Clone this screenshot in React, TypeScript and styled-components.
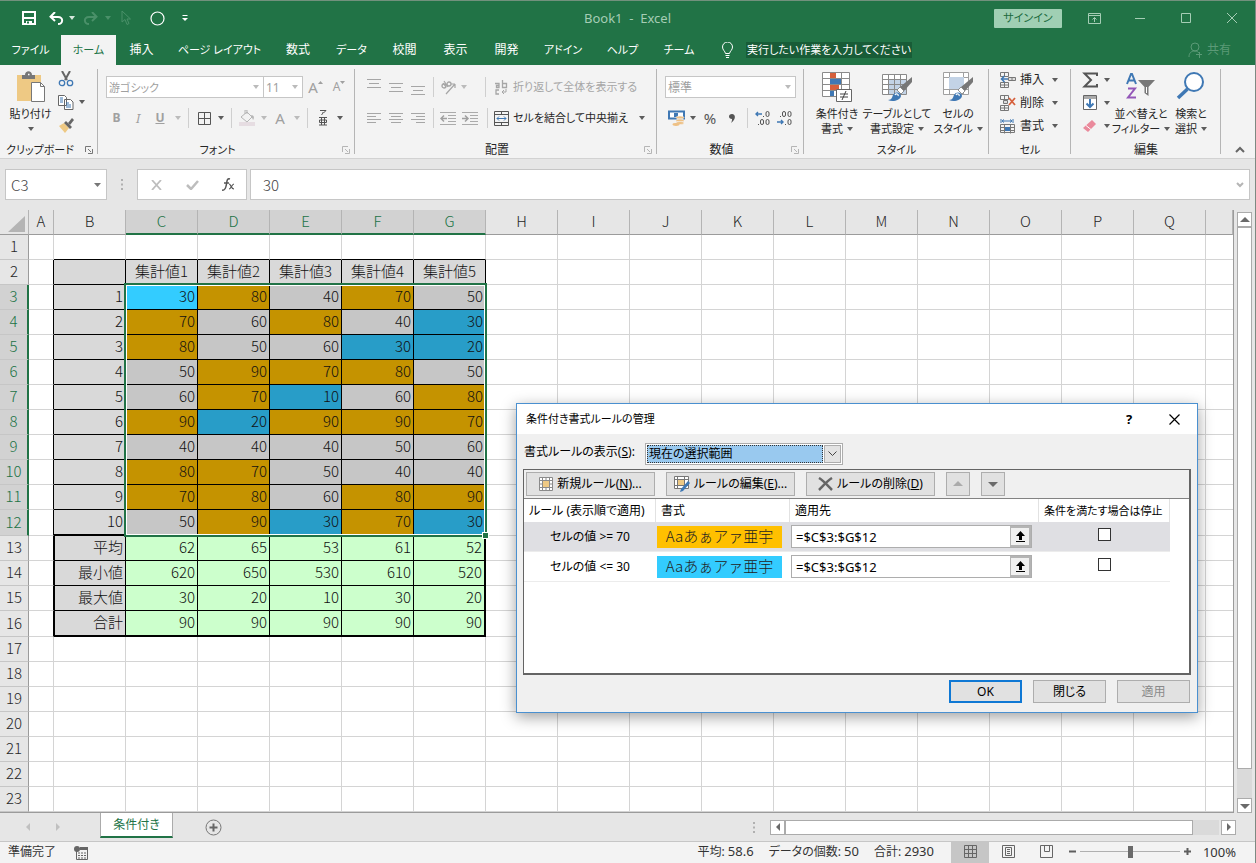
import React from "react";
import styled, { createGlobalStyle, css } from "styled-components";

const uiFont = `"Noto Sans", "Noto Sans CJK JP", sans-serif`;
const sheetFont = `"Noto Sans CJK JP", sans-serif`;

const Global = createGlobalStyle`
  *, *::before, *::after { box-sizing: border-box; }
  body { margin: 0; background: #e6e6e6; }
  button, input, select { font: inherit; color: inherit; }
  button { border: 0; background: none; padding: 0; margin: 0; }
`;

const Window = styled.div`
  position: relative;
  display: flex;
  flex-direction: column;
  min-height: 100vh;
  border-top: 1px solid #72917d;
  border-right: 1px solid #7d8a82;
  border-bottom: 1px solid #7f7f7f;
  background: #e6e6e6;
  color: #262626;
  font: 12px/16px ${uiFont};
  font-feature-settings: "palt";
  white-space: nowrap;
`;

/* ---------- title bar and tabs ---------- */

const TitleBar = styled.header`
  display: grid;
  grid-template-columns: 1fr auto 1fr;
  align-items: center;
  height: 34px;
  background: #217346;
  color: #f2f2f2;
`;
const QuickAccess = styled.div`
  display: flex;
  align-items: center;
  padding-left: 14px;
`;
const Title = styled.div`
  color: #a5cdb5;
  font-size: 13px;
`;
const WindowButtons = styled.div`
  display: flex;
  justify-content: flex-end;
  align-items: center;
`;
const Slot = styled.button<{ $w: number; $h?: number; $tone?: string; $align?: string }>`
  display: flex;
  flex: none;
  align-items: ${(p) => p.$align ?? "center"};
  justify-content: center;
  width: ${(p) => p.$w}px;
  height: ${(p) => p.$h ?? 22}px;
  padding: 3px 0;
  color: ${(p) => p.$tone ?? "inherit"};
`;
const SignIn = styled.button`
  width: 68px;
  height: 19px;
  margin-right: 9px;
  border-radius: 1px;
  background: #a0cfb4;
  color: #1c6b3f;
  font-size: 11px;
`;
const TabBar = styled.nav`
  display: flex;
  align-items: stretch;
  height: 30px;
  background: #217346;
  color: #fff;
`;
const Tab = styled.button<{ $w: number; $on?: boolean; $kana?: boolean }>`
  flex: none;
  width: ${(p) => p.$w}px;
  font-size: ${(p) => (p.$kana ? 11 : 12)}px;
  background: ${(p) => (p.$on ? "#f3f3f3" : "transparent")};
  color: ${(p) => (p.$on ? "#217346" : "#fff")};
`;
const TellMe = styled.div`
  display: flex;
  align-items: center;
  gap: 12px;
  padding-left: 14px;
`;
const TellMeText = styled.button`
  height: 16px;
  padding: 0 1px;
  background: #185c37;
  color: #fff;
  font-size: 11px;
`;
const Share = styled.button`
  display: flex;
  align-items: center;
  gap: 4px;
  margin-left: auto;
  margin-right: 24px;
  color: #5b9a77;
`;

/* ---------- ribbon ---------- */

const Ribbon = styled.section`
  display: flex;
  height: 94px;
  background: #f3f3f3;
  border-bottom: 1px solid #d2d2d2;
`;
const Group = styled.div<{ $w: number }>`
  position: relative;
  display: flex;
  flex: none;
  flex-direction: column;
  width: ${(p) => p.$w}px;
  padding-top: 3px;
  &::after {
    content: "";
    position: absolute;
    top: 4px;
    bottom: 4px;
    right: 0;
    width: 1px;
    background: #b5b5b5;
  }
`;
const GroupBody = styled.div<{ $left?: number }>`
  display: flex;
  height: 73px;
  padding-left: ${(p) => p.$left ?? 0}px;
`;
const GroupFoot = styled.div<{ $launcher?: boolean; $kana?: boolean }>`
  display: grid;
  grid-template-columns: ${(p) => (p.$launcher ? "1fr 18px" : "1fr")};
  align-items: center;
  justify-items: center;
  height: 17px;
  font-size: ${(p) => (p.$kana ? 11 : 12)}px;
`;
const Rows = styled.div`
  display: flex;
  flex-direction: column;
  gap: 9px;
  padding-top: 8px;
`;
const Row = styled.div`
  display: flex;
  align-items: center;
  height: 22px;
`;
const Column = styled.div<{ $w: number }>`
  display: flex;
  flex: none;
  flex-direction: column;
  width: ${(p) => p.$w}px;
`;
const Divider = styled.span<{ $w: number }>`
  flex: none;
  width: ${(p) => p.$w}px;
  height: 20px;
  background: linear-gradient(#cfcfcf, #cfcfcf) center / 1px 100% no-repeat;
`;
const ComboFrame = styled.span<{ $w: number }>`
  display: flex;
  flex: none;
  align-items: center;
  width: ${(p) => p.$w}px;
  height: 22px;
  padding-right: 4px;
  background: #fff;
  border: 1px solid #c6c6c6;
  color: #a0a0a0;
  & + & { border-left-width: 0; }
`;
const ComboInput = styled.input<{ $kana?: boolean }>`
  flex: 1;
  min-width: 0;
  height: 18px;
  padding: 0 0 0 2px;
  border: 0;
  outline: 0;
  background: none;
  font-size: ${(p) => (p.$kana ? 11 : 12)}px;
`;
const Command = styled.button<{ $dim?: boolean; $w?: number; $kana?: boolean }>`
  display: flex;
  flex: none;
  align-items: center;
  gap: 4px;
  height: 23px;
  font-size: ${(p) => (p.$kana ? 11 : 12)}px;
  ${(p) => p.$w && css`width: ${p.$w}px;`}
  color: ${(p) => (p.$dim ? "#a6a6a6" : "#262626")};
  & > svg:last-child:not(:first-child) { margin-left: auto; }
`;
const BigButton = styled.button<{ $w: number }>`
  display: flex;
  flex: none;
  flex-direction: column;
  align-items: center;
  width: ${(p) => p.$w}px;
  padding-top: 3px;
  font-size: 11px;
  line-height: 15px;
  & > svg { margin-bottom: 3px; }
`;
const BigLabel = styled.span`
  display: flex;
  align-items: center;
  gap: 4px;
  height: 15px;
`;
const Letter = styled.span<{ $size: number; $bold?: boolean; $italic?: boolean; $under?: boolean }>`
  font-size: ${(p) => p.$size}px;
  line-height: 16px;
  font-weight: ${(p) => (p.$bold ? 700 : 400)};
  font-style: ${(p) => (p.$italic ? "italic" : "normal")};
  text-decoration: ${(p) => (p.$under ? "underline" : "none")};
`;
const Collapse = styled.button`
  display: flex;
  align-self: flex-end;
  margin: 0 10px 4px auto;
`;

/* ---------- formula bar ---------- */

const FormulaBar = styled.div`
  display: flex;
  height: 51px;
  padding: 10px 5px;
`;
const Field = styled.div<{ $w?: number }>`
  display: flex;
  align-items: center;
  ${(p) => (p.$w ? css`flex: none; width: ${p.$w}px;` : css`flex: 1;`)}
  height: 31px;
  padding-right: 5px;
  border: 1px solid #c6c6c6;
  background: #fff;
  & + & { margin-left: 3px; }
`;
const FieldInput = styled.input<{ $left: number }>`
  flex: 1;
  min-width: 0;
  height: 26px;
  padding: 0 0 0 ${(p) => p.$left}px;
  border: 0;
  outline: 0;
  background: none;
  color: #444;
  font: 300 15px/26px ${sheetFont};
`;
const Grip = styled.span<{ $w: number }>`
  display: flex;
  flex: none;
  align-items: center;
  justify-content: center;
  width: ${(p) => p.$w}px;
`;

/* ---------- sheet ---------- */

const Workspace = styled.main`
  display: flex;
  flex: 1;
`;
const SheetArea = styled.div`
  position: relative;
  flex: 1;
  min-width: 0;
  overflow: hidden;
  border-right: 1px solid #9b9b9b;
  border-bottom: 1px solid #9b9b9b;
  background: #fff;
`;
const Sheet = styled.table`
  width: 100%;
  table-layout: fixed;
  border-collapse: separate;
  border-spacing: 0;
  font: 300 15px/20px ${sheetFont};
  font-feature-settings: normal;
  color: #111;
`;
const Line = styled.tr<{ $tall?: boolean }>`
  height: ${(p) => (p.$tall ? 26 : 25)}px;
`;
const ColHead = styled.th<{ $on?: boolean }>`
  padding: 0 0 2px;
  font-weight: 300;
  background: ${(p) => (p.$on ? "#d2d2d2" : "#e6e6e6")};
  color: ${(p) => (p.$on ? "#217346" : "#262626")};
  border-right: 1px solid #b4b4b4;
  border-bottom: ${(p) => (p.$on ? "2px solid #217346" : "1px solid #9b9b9b")};
`;
const Corner = styled.th`
  padding: 0 3px 2px 0;
  background: #e6e6e6;
  border-right: 1px solid #b4b4b4;
  border-bottom: 1px solid #9b9b9b;
  text-align: right;
  vertical-align: bottom;
  line-height: 0;
`;
const RowHead = styled.th<{ $on?: boolean }>`
  padding: 0 0 2px;
  font-weight: 300;
  background: ${(p) => (p.$on ? "#d2d2d2" : "#e6e6e6")};
  color: ${(p) => (p.$on ? "#217346" : "#262626")};
  border-right: ${(p) => (p.$on ? "2px solid #217346" : "1px solid #9b9b9b")};
  border-bottom: 1px solid #c6c6c6;
`;
const Cell = styled.td<{
  $fill?: string;
  $right?: string;
  $bottom?: string;
  $left?: string;
  $center?: boolean;
}>`
  height: 25px;
  padding: 0 2px 2px;
  overflow: hidden;
  background: ${(p) => p.$fill ?? "#fff"};
  border-right: ${(p) => p.$right ?? "1px solid #d4d4d4"};
  border-bottom: ${(p) => p.$bottom ?? "1px solid #d4d4d4"};
  border-left: ${(p) => p.$left ?? "0"};
  text-align: ${(p) => (p.$center ? "center" : "right")};
`;
const SelectionFrame = styled.div`
  position: absolute;
  left: 124px;
  top: 73px;
  width: 363px;
  height: 254px;
  border: 2px solid #217346;
  box-shadow: inset 0 0 0 1px #fff;
`;
const FillHandle = styled.span`
  position: absolute;
  right: -4px;
  bottom: -4px;
  width: 7px;
  height: 7px;
  border: 1px solid #fff;
  background: #217346;
`;
const VScroll = styled.div`
  display: flex;
  flex: none;
  flex-direction: column;
  width: 21px;
  padding: 2px 3px 0;
`;
const ScrollButton = styled.button`
  display: flex;
  flex: none;
  align-items: center;
  justify-content: center;
  width: 15px;
  height: 15px;
  border: 1px solid #ababab;
  background: #fff;
  color: #6a6a6a;
`;
const VTrack = styled.div`
  flex: 1;
  background: #dadada;
`;
const VThumb = styled.div`
  height: 95%;
  border: 1px solid #ababab;
  background: #fff;
`;

/* ---------- sheet tabs and status ---------- */

const SheetTabs = styled.div`
  display: flex;
  height: 29px;
  border-bottom: 1px solid #c6c6c6;
`;
const SheetNav = styled.div`
  display: flex;
  align-items: center;
  justify-content: center;
  gap: 20px;
  width: 100px;
  padding-right: 14px;
  color: #c0c0c0;
`;
const SheetTab = styled.button`
  width: 73px;
  height: 25px;
  border: solid #ababab;
  border-width: 0 1px;
  border-bottom: 2px solid #217346;
  background: #fff;
  color: #217346;
`;
const AddSheet = styled.button`
  display: flex;
  align-items: center;
  margin-left: 32px;
`;
const HScroll = styled.div`
  display: flex;
  align-items: center;
  flex: 0 0 502px;
  margin-left: auto;
  padding-right: 19px;
`;
const HBar = styled.div`
  display: flex;
  flex: 1;
  margin-left: 15px;
`;
const HTrack = styled.div`
  flex: 1;
  height: 15px;
  margin-right: 2px;
  background: #dadada;
`;
const HThumb = styled.div`
  width: 94%;
  height: 15px;
  border: 1px solid #ababab;
  background: #fff;
`;
const StatusBar = styled.footer`
  display: flex;
  align-items: center;
  height: 21px;
  padding: 0 19px 0 8px;
  background: #f3f3f3;
  color: #333;
`;
const StatusText = styled.span`
  padding-bottom: 2px;
`;
const Stats = styled.div`
  display: flex;
  gap: 15px;
  margin-left: auto;
  margin-right: 17px;
  padding-bottom: 2px;
`;
const Figure = styled.span`
  font-size: 13px;
`;
const ViewButton = styled.button<{ $on?: boolean }>`
  display: flex;
  align-items: center;
  justify-content: center;
  width: 38px;
  height: 21px;
  padding-bottom: 2px;
  background: ${(p) => (p.$on ? "#c6c6c6" : "transparent")};
`;
const ZoomGroup = styled.div`
  display: flex;
  align-items: center;
  padding: 0 0 2px 3px;
`;
const Zoom = styled.input`
  appearance: none;
  width: 100px;
  height: 13px;
  margin: 0 3px;
  background: linear-gradient(#b0b0b0, #b0b0b0) center / 100% 1px no-repeat;
  &::-webkit-slider-thumb {
    appearance: none;
    width: 5px;
    height: 12px;
    background: #6a6a6a;
  }
`;
const ZoomSign = styled.button`
  display: flex;
  justify-content: center;
  width: 9px;
`;
const ZoomValue = styled.span`
  width: 44px;
  font-size: 13px;
  text-align: right;
`;

/* ---------- dialog ---------- */

const Dialog = styled.section`
  position: absolute;
  left: 516px;
  top: 402px;
  width: 682px;
  border: 1px solid #4a90d0;
  background: #f0f0f0;
  color: #000;
  box-shadow: 0 4px 14px rgba(0, 0, 0, 0.38);
`;
const DialogTitle = styled.div`
  display: flex;
  align-items: center;
  height: 30px;
  padding: 0 1px 0 9px;
  background: #fff;
  font-size: 11px;
`;
const DialogTools = styled.div`
  display: flex;
  margin-left: auto;
`;
const Scope = styled.div`
  display: flex;
  align-items: center;
  gap: 10px;
  height: 35px;
  padding-left: 7px;
`;
const SelectFrame = styled.span`
  display: flex;
  width: 198px;
  height: 22px;
  margin-top: 4px;
  padding: 1px;
  border: 1px solid #adadad;
  background: #fff;
`;
const ScopeSelect = styled.select`
  appearance: none;
  flex: 1;
  min-width: 0;
  padding: 0 1px;
  border: 1px dotted #333;
  border-radius: 0;
  outline: 0;
  background: #99c9ef;
`;
const SelectArrow = styled.span`
  display: flex;
  align-items: center;
  justify-content: center;
  width: 17px;
  margin-left: 1px;
  border: 1px solid #adadad;
  background: #e3e3e3;
`;
const RulesBox = styled.div`
  margin: 0 6px;
  height: 206px;
  border: 1px solid #646464;
  border-right-width: 2px;
  border-bottom-width: 2px;
  background: #fff;
`;
const RuleTools = styled.div`
  display: flex;
  gap: 11px;
  padding: 2px;
  height: 29px;
  background: #f0f0f0;
  border-bottom: 1px solid #828282;
`;
const RuleButton = styled.button<{ $w: number; $tone?: string }>`
  display: flex;
  align-items: center;
  justify-content: center;
  gap: 4px;
  width: ${(p) => p.$w}px;
  height: 24px;
  border: 1px solid #adadad;
  background: #e1e1e1;
  color: ${(p) => p.$tone ?? "#000"};
`;
const Rules = styled.table`
  width: 646px;
  table-layout: fixed;
  border-collapse: separate;
  border-spacing: 0;
`;
const RuleHead = styled.th<{ $kana?: boolean }>`
  height: 23px;
  padding: 0 0 0 5px;
  border-right: 1px solid #e2e2e2;
  font-size: ${(p) => (p.$kana ? 11 : 12)}px;
  font-weight: 400;
  text-align: left;
`;
const RuleCell = styled.td<{ $on?: boolean }>`
  height: 30px;
  padding: 0 1px;
  background: ${(p) => (p.$on ? "#dfdfe3" : "#fff")};
  border-bottom: 1px solid #ececec;
  text-align: center;
`;
const Preview = styled.div<{ $fill: string }>`
  width: 125px;
  height: 22px;
  padding-bottom: 2px;
  background: ${(p) => p.$fill};
  color: #222;
  font: 300 15px/20px ${sheetFont};
  font-feature-settings: normal;
`;
const RangeBox = styled.div`
  display: flex;
  width: 241px;
  height: 23px;
  border: 1px solid #adadad;
  background: #fff;
`;
const RangeInput = styled.input`
  flex: 1;
  min-width: 0;
  padding: 0 4px;
  border: 0;
  outline: 0;
  background: none;
  font-size: 13px;
`;
const RangeButton = styled.button`
  display: flex;
  align-items: center;
  justify-content: center;
  width: 21px;
  border: 2px solid #b4b4b4;
  border-left-width: 1px;
  background: #f0f0f0;
`;
const Check = styled.input`
  appearance: none;
  display: block;
  width: 13px;
  height: 13px;
  margin: 0 auto 4px;
  border: 1px solid #333;
  background: #fff;
`;
const DialogFoot = styled.div`
  display: flex;
  justify-content: flex-end;
  gap: 11px;
  padding: 5px 7px 9px;
`;
const DialogButton = styled.button<{ $main?: boolean; $off?: boolean }>`
  width: 73px;
  height: 23px;
  border: ${(p) => (p.$main ? "2px solid #0f78d4" : "1px solid #adadad")};
  background: #e1e1e1;
  color: ${(p) => (p.$off ? "#8a8a8a" : "#000")};
`;

/* ---------- drawings ---------- */

const Drawing = styled.svg`
  display: block;
  flex: none;
`;
const Art = ({ w, h, children }: { w: number; h: number; children?: React.ReactNode }) => (
  <Drawing width={w} height={h} viewBox={`0 0 ${w} ${h}`} fill="none" aria-hidden="true">
    {children}
  </Drawing>
);
const Caret = ({ tone = "#5c5c5c" }: { tone?: string }) => (
  <Art w={6} h={4}><path d="M0 0h6L3 4z" fill={tone} /></Art>
);
const Launcher = ({ dim }: { dim?: boolean }) => (
  <Art w={8} h={8}>
    <path d="M.5 6V.5H6M3 3l3 3M7.500 3v4.500H3" stroke={dim ? "#b5b5b5" : "#777"} />
  </Art>
);
const Dots = () => (
  <Art w={2} h={11}><path d="M0 0h2v2H0zM0 4.500h2v2H0zM0 9h2v2H0z" fill="#b0b0b0" /></Art>
);
const Lines = ({ rows }: { rows: [number, number][] }) => (
  <Art w={14} h={rows.length > 3 ? 11 : 9}>
    {rows.map(([x, len], i) => (
      <path key={i} d={`M${x} ${i * (rows.length > 3 ? 3 : 4) + 0.5}h${len}`} stroke="#a6a6a6" />
    ))}
  </Art>
);
const Tri = ({ d }: { d: "u" | "d" | "l" | "r" }) => {
  const paths = { u: "M0 7h10L5 2z", d: "M0 3h10L5 8z", l: "M7 1v8L3 5z", r: "M3 1v8l4-4z" };
  return <Art w={10} h={10}><path d={paths[d]} fill="currentColor" /></Art>;
};
const Brush = () => (
  <>
    <path d="M31 6v5l-8 9-4-4z" fill="#777" />
    <path d="M19 16l4 4-3 3-4-4z" fill="#fff" stroke="#777" strokeWidth=".8" />
    <path d="M7 29c4 0 4-3 5-5 2-4 8-3 8 1-1 5-9 6-13 4z" fill="#3f78b4" />
    <path d="M14 24c1-2 4-1 3 1" stroke="#fff" strokeWidth="1.200" />
  </>
);
const CellsIcon = ({ kind }: { kind: "insert" | "delete" | "format" }) => (
  <Art w={16} h={16}>
    {kind === "format" ? (
      <>
        <path d="M1 1v4M13 1v4M2 3h10" stroke="#3f78b4" />
        <path d="M4 1.500L2 3l2 1.500M10 1.500L12 3l-2 1.500" stroke="#3f78b4" />
        <path d="M.5 6.500h14v8H.5zM.5 9.500h14M.5 12.500h14M4.500 6.500v9M10.500 6.500v9" stroke="#777" />
        <path d="M5 9h5v4H5z" fill="#3f78b4" />
      </>
    ) : (
      <>
        <path d="M.5 .5h8v4h-8zM4.500 .5v4M.5 10.500h8v5h-8zM4.500 10.500v5M.5 13h8" stroke="#777" />
        {kind === "insert" ? (
          <>
            <path d="M8.500 5.500h7v3h-7zM12 5.500v3" stroke="#777" fill="#ddd" />
            <path d="M8 7H2M4.500 4L1.500 7l3 3" stroke="#3f78b4" strokeWidth="1.600" />
          </>
        ) : (
          <>
            <path d="M3.500 5.500h4v3h-4z" stroke="#777" fill="#ddd" />
            <path d="M9 3l6 7M15 3l-6 7" stroke="#d6603c" strokeWidth="1.800" />
          </>
        )}
      </>
    )}
  </Art>
);

/* ---------- data ---------- */

const GRAY = "#c6c6c6";
const GOLD = "#c59300";
const BLUE = "#289dc8";
const ACTIVE = "#33ccff";
const HEAD = "#d9d9d9";
const MINT = "#ccffcc";
const BLACK = "1px solid #000";
const THICK = "2px solid #000";

const columns = "ABCDEFGHIJKLMNOPQ".split("");
const values = [
  [30, 80, 40, 70, 50],
  [70, 60, 80, 40, 30],
  [80, 50, 60, 30, 20],
  [50, 90, 70, 80, 50],
  [60, 70, 10, 60, 80],
  [90, 20, 90, 90, 70],
  [40, 40, 40, 50, 60],
  [80, 70, 50, 40, 40],
  [70, 80, 60, 80, 90],
  [50, 90, 30, 70, 30],
];
const summary: [string, number[]][] = [
  ["平均", [62, 65, 53, 61, 52]],
  ["最小値", [620, 650, 530, 610, 520]],
  ["最大値", [30, 20, 10, 30, 20]],
  ["合計", [90, 90, 90, 90, 90]],
];
const fillFor = (v: number, first: boolean) =>
  first ? ACTIVE : v >= 70 ? GOLD : v <= 30 ? BLUE : GRAY;

const tabs: { name: string; w: number; kana?: boolean }[] = [
  { name: "ファイル", w: 61, kana: true },
  { name: "ホーム", w: 55, kana: true },
  { name: "挿入", w: 51 },
  { name: "ページ レイアウト", w: 105, kana: true },
  { name: "数式", w: 52 },
  { name: "データ", w: 55, kana: true },
  { name: "校閲", w: 51 },
  { name: "表示", w: 51 },
  { name: "開発", w: 51 },
  { name: "アドイン", w: 62, kana: true },
  { name: "ヘルプ", w: 57, kana: true },
  { name: "チーム", w: 56, kana: true },
];

function SheetRow({ n }: { n: number }) {
  const inBlock = n >= 2 && n <= 16;
  const total = n >= 13 && n <= 16;
  const data = n >= 3 && n <= 12;
  const bottomOf = (col: number) => {
    if (col < 1 || col > 6 || n > 16) return undefined;
    return n === 16 || n === 12 ? THICK : BLACK;
  };
  return (
    <Line $tall={n === 12 || n === 16}>
      <RowHead scope="row" $on={data}>{n}</RowHead>
      {[...columns, "R"].map((c, i) => {
        const within = inBlock && i >= 1 && i <= 6;
        let text: React.ReactNode = null;
        let fill: string | undefined;
        if (within) {
          if (n === 2) {
            fill = HEAD;
            text = i > 1 ? `集計値${i - 1}` : null;
          } else if (data) {
            const v = values[n - 3][i - 2];
            fill = i === 1 ? HEAD : fillFor(v, n === 3 && i === 2);
            text = i === 1 ? n - 2 : v;
          } else {
            fill = i === 1 ? HEAD : MINT;
            text = i === 1 ? summary[n - 13][0] : summary[n - 13][1][i - 2];
          }
        }
        return (
          <Cell
            key={c}
            $fill={fill}
            $center={n === 2}
            $left={total && i === 1 ? BLACK : undefined}
            $right={
              i === 17 ? "0" : total && i === 6 ? THICK : within || (inBlock && i === 0) ? BLACK : undefined
            }
            $bottom={bottomOf(i)}
          >
            {text}
          </Cell>
        );
      })}
    </Line>
  );
}

function RibbonArea() {
  return (
    <Ribbon>
      <Group $w={98}>
        <GroupBody $left={7}>
          <BigButton $w={47}>
            <Art w={30} h={32}>
              <path d="M1 4h24v26H1z" fill="#eec984" />
              <path d="M6 8V4h3c0-5 7-5 7 0h3v4z" fill="#777" />
              <path d="M12 3.500h1.500" stroke="#fff" strokeWidth="1.500" />
              <path d="M15.500 11.500h9l4 4v15h-13z" fill="#fff" stroke="#777" />
              <path d="M24.500 11.500v4h4" stroke="#777" />
            </Art>
            貼り付け
            <BigLabel><Caret /></BigLabel>
          </BigButton>
          <Column $w={24}>
            <Slot $w={24} aria-label="切り取り">
              <Art w={16} h={16}>
                <path d="M4 0l5 9M12 0L7 9" stroke="#666" strokeWidth="2" />
                <circle cx="4" cy="12" r="2.700" stroke="#3f78b4" strokeWidth="1.300" />
                <circle cx="12" cy="12" r="2.700" stroke="#3f78b4" strokeWidth="1.300" />
              </Art>
            </Slot>
            <Slot $w={24} $h={24} aria-label="コピー">
              <Art w={16} h={15}>
                <path d="M.5 .5h6l2 2v8h-8zM6.500 4.500h6l2.500 2.500v7.500H6.500z" fill="#fff" stroke="#666" />
                <path d="M2 3h3M2 5h3M2 7h3M8 8h3M8 10h5M8 12h5" stroke="#3f78b4" />
              </Art>
            </Slot>
            <Slot $w={24} aria-label="書式のコピー">
              <Art w={17} h={15}>
                <path d="M1 8l5-3 5 5-4 5z" fill="#eec984" />
                <path d="M6 5l2-2 6 6-2 2z" fill="#666" />
                <path d="M10 5l4-5 2 2-4 5z" fill="#666" />
              </Art>
            </Slot>
          </Column>
          <Slot $w={8} $h={68} aria-label="コピーのオプション"><Caret /></Slot>
        </GroupBody>
        <GroupFoot $launcher $kana><span>クリップボード</span><Launcher /></GroupFoot>
      </Group>

      <Group $w={257}>
        <GroupBody $left={8}>
          <Rows>
            <Row>
              <ComboFrame $w={158}><ComboInput $kana aria-label="フォント" defaultValue="游ゴシック" /><Caret tone="#bbb" /></ComboFrame>
              <ComboFrame $w={39}><ComboInput aria-label="サイズ" defaultValue="11" /><Caret tone="#bbb" /></ComboFrame>
              <Slot $w={25} $tone="#a0a0a0" aria-label="拡大">
                <Letter $size={15}>A</Letter><Art w={5} h={14}><path d="M0 4h5L2.500 1z" fill="#a0a0a0" /></Art>
              </Slot>
              <Slot $w={22} $tone="#a0a0a0" aria-label="縮小">
                <Letter $size={12}>A</Letter><Art w={5} h={14}><path d="M0 1h5L2.500 4z" fill="#a0a0a0" /></Art>
              </Slot>
            </Row>
            <Row>
              <Slot $w={21} $tone="#a0a0a0"><Letter $size={12} $bold>B</Letter></Slot>
              <Slot $w={22} $tone="#a0a0a0"><Letter $size={13} $italic>I</Letter></Slot>
              <Slot $w={22} $tone="#a0a0a0"><Letter $size={12} $bold $under>U</Letter></Slot>
              <Slot $w={14}><Caret tone="#bbb" /></Slot>
              <Divider $w={7} />
              <Slot $w={24} aria-label="罫線">
                <Art w={13} h={13}><path d="M.5 .5h12v12H.5zM6.500 .5v12M.5 6.500h12" stroke="#555" /></Art>
              </Slot>
              <Slot $w={10}><Caret /></Slot>
              <Divider $w={10} />
              <Slot $w={21} aria-label="塗りつぶし">
                <Art w={16} h={16}>
                  <path d="M0 12h16v4H0z" fill="#e6dde2" />
                  <path d="M2 7l6-5 5 5-5 5zM6 4V0h2v4" stroke="#b5b5b5" />
                  <path d="M12 5c4 0 3 4 2 5z" fill="#b5b5b5" />
                </Art>
              </Slot>
              <Slot $w={13}><Caret tone="#bbb" /></Slot>
              <Slot $w={20} $tone="#a0a0a0"><Letter $size={15}>A</Letter></Slot>
              <Slot $w={13}><Caret tone="#bbb" /></Slot>
              <Divider $w={9} />
              <Slot $w={22} aria-label="ふりがな">
                <Art w={10} h={16}>
                  <path d="M2 .5h6L5.500 3M5 2v1L3.500 5M1 7.500h8M1 15h8M3.500 7.500V15M6.500 7.500V15M1.500 10h7v2.500h-7z" stroke="#555" />
                </Art>
              </Slot>
              <Slot $w={12}><Caret /></Slot>
            </Row>
          </Rows>
        </GroupBody>
        <GroupFoot $launcher $kana><span>フォント</span><Launcher dim /></GroupFoot>
      </Group>

      <Group $w={302}>
        <GroupBody $left={8}>
          <Rows>
            <Row>
              <Slot $w={22} $align="flex-start" aria-label="上揃え"><Lines rows={[[0, 14], [2, 10], [0, 14]]} /></Slot>
              <Slot $w={22} aria-label="上下中央揃え"><Lines rows={[[0, 14], [2, 10], [0, 14]]} /></Slot>
              <Slot $w={22} $align="flex-end" aria-label="下揃え"><Lines rows={[[0, 14], [2, 10], [0, 14]]} /></Slot>
              <Divider $w={8} />
              <Slot $w={22} aria-label="方向">
                <Art w={17} h={15}>
                  <circle cx="4" cy="6" r="2" stroke="#a6a6a6" strokeWidth="1.300" />
                  <path d="M3 3l3 4M8 7L4 1M6 14L15 4M15 4v4M15 4h-4" stroke="#a6a6a6" strokeWidth="1.200" />
                  <circle cx="9" cy="4" r="2" stroke="#a6a6a6" strokeWidth="1.300" />
                </Art>
              </Slot>
              <Slot $w={10}><Caret tone="#bbb" /></Slot>
              <Slot $w={9} as="span" />
              <Divider $w={15} />
              <Command $dim $kana>
                <Art w={16} h={15}>
                  <path d="M2 3.500h4v4H3.500v-2H6M9.500 0v7.500h4v-4h-4M6 10H3v4h3" stroke="#a6a6a6" strokeWidth="1.300" />
                  <path d="M13 9v3H9M11 10l-2 2 2 2" stroke="#a6a6a6" />
                </Art>
                折り返して全体を表示する
              </Command>
            </Row>
            <Row>
              <Slot $w={22} aria-label="左揃え"><Lines rows={[[0, 14], [0, 9], [0, 14], [0, 9]]} /></Slot>
              <Slot $w={22} aria-label="中央揃え"><Lines rows={[[0, 14], [2, 10], [0, 14], [2, 10]]} /></Slot>
              <Slot $w={22} aria-label="右揃え"><Lines rows={[[0, 14], [5, 9], [0, 14], [5, 9]]} /></Slot>
              <Divider $w={8} />
              <Slot $w={22} aria-label="インデント解除">
                <Art w={16} h={13}><path d="M0 .5h16M8 3.500h8M8 6.500h8M8 9.500h8M0 12.500h16" stroke="#ababab" /><path d="M7 6.500H1M4 3.500l-3 3 3 3" stroke="#a0a0a0" strokeWidth="1.500" /></Art>
              </Slot>
              <Slot $w={22} aria-label="インデント">
                <Art w={16} h={13}><path d="M0 .5h16M8 3.500h8M8 6.500h8M8 9.500h8M0 12.500h16" stroke="#ababab" /><path d="M0 6.500h6M3 3.500l3 3-3 3" stroke="#a0a0a0" strokeWidth="1.500" /></Art>
              </Slot>
              <Divider $w={12} />
              <Command $w={152} $kana>
                <Art w={16} h={15}>
                  <path d="M1.500 .5h14v14h-14zM1.500 3.500h14M1.500 11.500h14M8.500 .5v3M8.500 11.500v3" stroke="#555" />
                  <path d="M4 7.500h9M6 5.500l-2 2 2 2M11 5.500l2 2-2 2" stroke="#3f78b4" />
                </Art>
                セルを結合して中央揃え
                <Caret />
              </Command>
            </Row>
          </Rows>
        </GroupBody>
        <GroupFoot $launcher><span>配置</span><Launcher dim /></GroupFoot>
      </Group>

      <Group $w={147}>
        <GroupBody $left={8}>
          <Rows>
            <Row>
              <ComboFrame $w={131}><ComboInput aria-label="表示形式" defaultValue="標準" /><Caret tone="#bbb" /></ComboFrame>
            </Row>
            <Row>
              <Slot $w={22} aria-label="通貨">
                <Art w={17} h={16}>
                  <path d="M1 1.500h15v7H1z" fill="#fff" stroke="#3f78b4" strokeWidth="2" />
                  <path d="M6 3h4v4H6z" fill="#3f78b4" />
                  <ellipse cx="12" cy="7.500" rx="4" ry="1.500" fill="#eec084" stroke="#f3f3f3" strokeWidth=".6" />
                  <ellipse cx="12" cy="10.500" rx="4" ry="1.500" fill="#eec084" stroke="#f3f3f3" strokeWidth=".6" />
                  <ellipse cx="12" cy="13" rx="4" ry="1.500" fill="#eec084" stroke="#f3f3f3" strokeWidth=".6" />
                  <ellipse cx="8" cy="14.500" rx="3.500" ry="1.400" fill="#eec084" />
                </Art>
              </Slot>
              <Slot $w={11}><Caret /></Slot>
              <Slot $w={24} $tone="#555"><Letter $size={15}>%</Letter></Slot>
              <Slot $w={20} aria-label="桁区切り"><Art w={6} h={9}><path d="M3 0c4 0 4 6-1 9 1-2 1-3 1-4-4 0-4-5 0-5z" fill="#555" /></Art></Slot>
              <Divider $w={10} />
              <Slot $w={20} aria-label="小数点以下の表示桁数を増やす">
                <Art w={15} h={14}>
                  <path d="M7 3H1M3 1L1 3l2 2" stroke="#3f78b4" strokeWidth="1.400" />
                  <rect x="11" y=".5" width="3" height="5" rx="1.500" stroke="#555" /><rect x="5.500" y="8.500" width="3" height="5" rx="1.500" stroke="#555" /><rect x="11" y="8.500" width="3" height="5" rx="1.500" stroke="#555" />
                  <path d="M8 5h1v1H8zM3 13h1v1H3z" fill="#555" />
                </Art>
              </Slot>
              <Slot $w={24} aria-label="小数点以下の表示桁数を減らす">
                <Art w={15} h={14}>
                  <path d="M0 11h6M4 9l2 2-2 2" stroke="#3f78b4" strokeWidth="1.400" />
                  <rect x="5.500" y=".5" width="3" height="5" rx="1.500" stroke="#555" /><rect x="11" y=".5" width="3" height="5" rx="1.500" stroke="#555" /><rect x="11" y="8.500" width="3" height="5" rx="1.500" stroke="#555" />
                  <path d="M3 5h1v1H3zM8 13h1v1H8z" fill="#555" />
                </Art>
              </Slot>
            </Row>
          </Rows>
        </GroupBody>
        <GroupFoot $launcher><span>数値</span><Launcher dim /></GroupFoot>
      </Group>

      <Group $w={185}>
        <GroupBody $left={7}>
          <BigButton $w={52}>
            <Art w={32} h={32}>
              <path d="M1.500 1.500h27v24h-27zM1.500 7.500h27M1.500 13.500h27M1.500 19.500h27M9.500 1.500v24M20.500 1.500v24" fill="#fff" stroke="#8a8a8a" />
              <path d="M9 2h6v5H9zM9 14h9v5H9z" fill="#d6603c" /><path d="M9 8h11v5H9zM9 20h4v5H9z" fill="#3f78b4" />
              <path d="M15.500 18.500h15v12h-15z" fill="#fff" stroke="#666" />
              <path d="M19 23h8M19 26h8M25 20l-4 9" stroke="#444" />
            </Art>
            条件付き
            <BigLabel>書式<Caret /></BigLabel>
          </BigButton>
          <BigButton $w={68}>
            <Art w={32} h={32}>
              <path d="M1.500 3.500h24v20h-24z" fill="#fff" /><path d="M8 9h17v14H8z" fill="#c3d3e6" />
              <path d="M1.500 3.500h24v20h-24zM1.500 8.500h24M1.500 13.500h24M1.500 18.500h24M7.500 3.500v20M13.500 3.500v20M19.500 3.500v20" stroke="#8a8a8a" />
              <Brush />
            </Art>
            テーブルとして
            <BigLabel>書式設定<Caret /></BigLabel>
          </BigButton>
          <BigButton $w={54}>
            <Art w={32} h={32}>
              <path d="M1.500 1.500h25v22h-25zM1.500 6.500h25M1.500 18.500h25M7.500 1.500v22M21.500 1.500v22" fill="#fff" stroke="#a0a0a0" />
              <path d="M7 6h15v12H7z" fill="#c3d3e6" />
              <Brush />
            </Art>
            セルの
            <BigLabel>スタイル<Caret /></BigLabel>
          </BigButton>
        </GroupBody>
        <GroupFoot $kana>スタイル</GroupFoot>
      </Group>

      <Group $w={82}>
        <GroupBody $left={11}>
          <Column $w={58}>
            <Command><CellsIcon kind="insert" />挿入<Caret /></Command>
            <Command><CellsIcon kind="delete" />削除<Caret /></Command>
            <Command><CellsIcon kind="format" />書式<Caret /></Command>
          </Column>
        </GroupBody>
        <GroupFoot $kana>セル</GroupFoot>
      </Group>

      <Group $w={150}>
        <GroupBody $left={11}>
          <Column $w={28}>
            <Command aria-label="合計" $w={28}>
              <Art w={17} h={16}><path d="M15 4V1.500H2.500L9 8l-6.500 6.500H15V12" stroke="#555" strokeWidth="2" /></Art><Caret />
            </Command>
            <Command aria-label="フィル" $w={28}>
              <Art w={16} h={15}><path d="M1.500 .5h13v14h-13z" fill="#fff" stroke="#666" /><path d="M2 1h12v3H2z" fill="#aaa" /><path d="M8 4v8M4.500 8.500L8 12l3.500-3.500" stroke="#3f78b4" strokeWidth="2" /></Art><Caret />
            </Command>
            <Command aria-label="クリア" $w={28}>
              <Art w={16} h={14}><path d="M1 9l9-8 4 4-8 8z" fill="#ea8a9c" /><path d="M4 6.500l5 4" stroke="#fff" /></Art><Caret />
            </Command>
          </Column>
          <BigButton $w={62}>
            <Art w={30} h={32}>
              <path d="M1 13L5 3h1l4 10M2.500 9.500h6" stroke="#3f78b4" strokeWidth="2" />
              <path d="M2 17.500h7L2 26.500h8" stroke="#9357b8" strokeWidth="2" />
              <path d="M12 9h17l-6.500 7v9l-4-3v-6z" fill="#777" /><path d="M20 16h1v6h-1z" fill="#fff" />
            </Art>
            並べ替えと
            <BigLabel>フィルター<Caret /></BigLabel>
          </BigButton>
          <BigButton $w={38}>
            <Art w={30} h={32}>
              <circle cx="18" cy="11" r="9" fill="#fff" stroke="#3f78b4" strokeWidth="2" />
              <path d="M11.500 18L2 27" stroke="#3f78b4" strokeWidth="3.500" />
            </Art>
            検索と
            <BigLabel>選択<Caret /></BigLabel>
          </BigButton>
        </GroupBody>
        <GroupFoot>編集</GroupFoot>
      </Group>
      <Collapse aria-label="リボンを折りたたむ"><Art w={10} h={8}><path d="M1 6l4-4 4 4" stroke="#666" strokeWidth="2" /></Art></Collapse>
    </Ribbon>
  );
}

function RulesDialog() {
  const rules: [string, string][] = [["セルの値 >= 70", "#ffc000"], ["セルの値 <= 30", "#33ccff"]];
  return (
    <Dialog role="dialog" aria-label="条件付き書式ルールの管理">
      <DialogTitle>
        条件付き書式ルールの管理
        <DialogTools>
          <Slot $w={46}><Letter $size={13} $bold>?</Letter></Slot>
          <Slot $w={44} aria-label="閉じる"><Art w={11} h={11}><path d="M.5 .5l10 10M10.500 .5l-10 10" stroke="#000" strokeWidth="1.200" /></Art></Slot>
        </DialogTools>
      </DialogTitle>
      <Scope>
        <label htmlFor="scope">書式ルールの表示(<u>S</u>):</label>
        <SelectFrame>
          <ScopeSelect id="scope"><option>現在の選択範囲</option></ScopeSelect>
          <SelectArrow><Art w={9} h={6}><path d="M.5 .5l4 4 4-4" stroke="#444" /></Art></SelectArrow>
        </SelectFrame>
      </Scope>
      <RulesBox>
        <RuleTools>
          <RuleButton $w={129}>
            <Art w={14} h={14}><path d="M.5 .5h13v13H.5zM.5 3.500h13M.5 10.500h13M3.500 .5v13M10.500 .5v13M7 .5v3M7 10.500v3M.5 7h3M10.500 7h3" fill="#fff" stroke="#8a8a8a" /><path d="M4 4h6v6H4z" fill="#eec984" /></Art>
            <span>新規ルール(<u>N</u>)...</span>
          </RuleButton>
          <RuleButton $w={129}>
            <Art w={16} h={16}><path d="M.5 .5h14v12H.5zM.5 3.500h14M.5 9.500h14M3.500 .5v12M10.500 .5v12" fill="#fff" stroke="#777" /><path d="M4 4h6v5H4z" fill="#eec984" /><path d="M14 5l2 2-7 8-3 1 1-3z" fill="#3f78b4" /></Art>
            <span>ルールの編集(<u>E</u>)...</span>
          </RuleButton>
          <RuleButton $w={129}>
            <Art w={15} h={14}><path d="M1 1c5 3 9 8 13 12M14 1C9 4 5 9 1 13" stroke="#666" strokeWidth="2.500" /></Art>
            <span>ルールの削除(<u>D</u>)</span>
          </RuleButton>
          <RuleButton $w={24} $tone="#ababab" aria-label="上へ移動"><Tri d="u" /></RuleButton>
          <RuleButton $w={24} $tone="#6a6a6a" aria-label="下へ移動"><Tri d="d" /></RuleButton>
        </RuleTools>
        <Rules>
          <colgroup><col width="132" /><col width="134" /><col width="249" /><col width="131" /></colgroup>
          <thead>
            <tr><RuleHead>ルール (表示順で適用)</RuleHead><RuleHead>書式</RuleHead><RuleHead>適用先</RuleHead><RuleHead $kana>条件を満たす場合は停止</RuleHead></tr>
          </thead>
          <tbody>
            {rules.map(([name, fill], i) => (
              <tr key={name}>
                <RuleCell $on={i === 0}>{name}</RuleCell>
                <RuleCell $on={i === 0}><Preview $fill={fill}>Aaあぁアァ亜宇</Preview></RuleCell>
                <RuleCell $on={i === 0}>
                  <RangeBox>
                    <RangeInput aria-label={`適用先 ${name}`} defaultValue="=$C$3:$G$12" />
                    <RangeButton aria-label="範囲の選択"><Art w={9} h={11}><path d="M0 10h9v1H0zM3 9V5H0l4.500-5L9 5H6v4z" fill="#000" /></Art></RangeButton>
                  </RangeBox>
                </RuleCell>
                <RuleCell $on={i === 0}><Check type="checkbox" aria-label={`停止 ${name}`} /></RuleCell>
              </tr>
            ))}
          </tbody>
        </Rules>
      </RulesBox>
      <DialogFoot>
        <DialogButton $main>OK</DialogButton>
        <DialogButton>閉じる</DialogButton>
        <DialogButton $off>適用</DialogButton>
      </DialogFoot>
    </Dialog>
  );
}

export default function App() {
  return (
    <Window>
      <Global />
      <TitleBar>
        <QuickAccess>
          <Slot $w={30} aria-label="保存">
            <Art w={14} h={14}><path d="M1 1h12v12H1z" stroke="#fff" strokeWidth="2" /><path d="M2 7h10" stroke="#fff" strokeWidth="2" /><path d="M4 10h6v3H4z" fill="#fff" /><path d="M5 10.500h2v2H5z" fill="#217346" /></Art>
          </Slot>
          <Slot $w={24} aria-label="元に戻す">
            <Art w={15} h={13}><path d="M2 5h7c6 0 5 7 0 7M6 0L1.500 4.800 6 9" stroke="#fff" strokeWidth="2" /></Art>
          </Slot>
          <Slot $w={8}><Caret tone="#d5e7dc" /></Slot>
          <Slot $w={28} aria-label="やり直し">
            <Art w={15} h={13}><path d="M13 5H6c-6 0-5 7 0 7M9 0l4.500 4.800L9 9" stroke="#4a9069" strokeWidth="2" /></Art>
          </Slot>
          <Slot $w={8}><Caret tone="#4a9069" /></Slot>
          <Slot $w={28} aria-label="選択"><Art w={10} h={16}><path d="M1 1v11l3-2.500 2 5 2-1-2-4.500h3.500z" stroke="#4a9069" /></Art></Slot>
          <Slot $w={34} aria-label="記録"><Art w={15} h={15}><circle cx="7.500" cy="7.500" r="6.500" stroke="#fff" strokeWidth="1.200" /></Art></Slot>
          <Slot $w={22} aria-label="カスタマイズ"><Art w={6} h={7}><path d="M.5 .5h5" stroke="#fff" /><path d="M0 3h6L3 6z" fill="#fff" /></Art></Slot>
        </QuickAccess>
        <Title>Book1&nbsp; - &nbsp;Excel</Title>
        <WindowButtons>
          <SignIn>サインイン</SignIn>
          <Slot $w={46} $tone="#a5cdb5" aria-label="リボンの表示"><Art w={13} h={11}><path d="M.5 .5h12v10H.5zM.5 2.500h12M6.500 9V4.500M4.500 6.500l2-2 2 2" stroke="currentColor" /></Art></Slot>
          <Slot $w={46} $tone="#a5cdb5" aria-label="最小化"><Art w={10} h={1}><path d="M0 .5h10" stroke="currentColor" /></Art></Slot>
          <Slot $w={46} $tone="#a5cdb5" aria-label="最大化"><Art w={10} h={10}><path d="M.5 .5h9v9h-9z" stroke="currentColor" /></Art></Slot>
          <Slot $w={46} $tone="#a5cdb5" aria-label="閉じる"><Art w={10} h={10}><path d="M0 0l10 10M10 0L0 10" stroke="currentColor" /></Art></Slot>
        </WindowButtons>
      </TitleBar>
      <TabBar>
        {tabs.map((t, i) => <Tab key={t.name} $w={t.w} $kana={t.kana} $on={i === 1}>{t.name}</Tab>)}
        <TellMe>
          <Art w={13} h={16}><path d="M4.500 11.500C4 9 1.500 8 1.500 5a5 5 0 0110 0c0 3-2.500 4-3 6.500zM4.500 13.500h4M5 15.500h3" stroke="#fff" /></Art>
          <TellMeText>実行したい作業を入力してください</TellMeText>
        </TellMe>
        <Share>
          <Art w={15} h={16}><circle cx="7" cy="5" r="4" stroke="#5b9a77" /><path d="M1 15c0-4 2-6 6-6 2 0 3 1 4 2M8 12.500h6M11.500 10v6" stroke="#5b9a77" /></Art>
          共有
        </Share>
      </TabBar>
      <RibbonArea />
      <FormulaBar>
        <Field $w={102}><FieldInput aria-label="名前ボックス" $left={5} defaultValue="C3" /><Art w={7} h={4}><path d="M0 0h7L3.500 4z" fill="#777" /></Art></Field>
        <Grip $w={30}><Dots /></Grip>
        <Field $w={110}>
          <Slot $w={36} aria-label="キャンセル"><Art w={11} h={10}><path d="M1 0l9 10M10 0L1 10" stroke="#bdbdbd" strokeWidth="1.800" /></Art></Slot>
          <Slot $w={36} aria-label="入力"><Art w={13} h={10}><path d="M1 5l4 4 7-8" stroke="#bdbdbd" strokeWidth="2.500" /></Art></Slot>
          <Slot $w={36} aria-label="関数の挿入">
            <Art w={13} h={13}><path d="M8 1C5 0 5 3 4.500 6S3 13 0 12M2 5h5" stroke="#555" strokeWidth="1.500" /><path d="M7 6c2 0 2 5 5 5M12 6c-2 0-3 5-5 5" stroke="#555" strokeWidth="1.200" /></Art>
          </Slot>
        </Field>
        <Field><FieldInput aria-label="数式バー" $left={12} defaultValue="30" /><Art w={8} h={6}><path d="M1 1l3 3 3-3" stroke="#b5b5b5" strokeWidth="2" /></Art></Field>
      </FormulaBar>
      <Workspace>
        <SheetArea>
          <Sheet>
            <colgroup>
              <col width="29" /><col width="25" />
              {columns.slice(1).map((c) => <col key={c} width="72" />)}
              <col />
            </colgroup>
            <thead>
              <Line>
                <Corner aria-label="すべて選択"><svg width="17" height="16" viewBox="0 0 17 16"><path d="M17 0v16H0z" fill="#b4b4b4" /></svg></Corner>
                {columns.map((c, i) => <ColHead key={c} scope="col" $on={i >= 2 && i <= 6}>{c}</ColHead>)}
                <ColHead scope="col" aria-label="R" />
              </Line>
            </thead>
            <tbody>
              {Array.from({ length: 23 }, (_, i) => <SheetRow key={i} n={i + 1} />)}
            </tbody>
          </Sheet>
          <SelectionFrame><FillHandle /></SelectionFrame>
        </SheetArea>
        <VScroll>
          <ScrollButton aria-label="上へ"><Tri d="u" /></ScrollButton>
          <VTrack><VThumb /></VTrack>
          <ScrollButton aria-label="下へ"><Tri d="d" /></ScrollButton>
        </VScroll>
      </Workspace>
      <SheetTabs>
        <SheetNav><Tri d="l" /><Tri d="r" /></SheetNav>
        <SheetTab>条件付き</SheetTab>
        <AddSheet aria-label="シートの追加"><Art w={17} h={17}><circle cx="8.500" cy="8.500" r="7.500" stroke="#777" /><path d="M8.500 4.500v8M4.500 8.500h8" stroke="#666" strokeWidth="2" /></Art></AddSheet>
        <HScroll>
          <Dots />
          <HBar>
            <ScrollButton aria-label="左へ"><Tri d="l" /></ScrollButton>
            <HTrack><HThumb /></HTrack>
            <ScrollButton aria-label="右へ"><Tri d="r" /></ScrollButton>
          </HBar>
        </HScroll>
      </SheetTabs>
      <StatusBar>
        <StatusText>準備完了</StatusText>
        <Slot $w={50} $h={20} aria-label="マクロの記録">
          <Art w={14} h={14}><path d="M2.500 4v9.500h11V2.500H5" stroke="#666" /><path d="M6 1h8v3H6z" fill="#666" /><circle cx="3" cy="3" r="3" fill="#666" /><path d="M4 7h8M4 9.500h8M4 12h8" stroke="#666" strokeDasharray="2 1" /></Art>
        </Slot>
        <Stats>
          <span>平均: <Figure>58.6</Figure></span>
          <span>データの個数: <Figure>50</Figure></span>
          <span>合計: <Figure>2930</Figure></span>
        </Stats>
        <ViewButton $on aria-label="標準"><Art w={13} h={13}><path d="M.5 .5h12v12H.5zM4.500 .5v12M8.500 .5v12M.5 4.500h12M.5 8.500h12" stroke="#666" /></Art></ViewButton>
        <ViewButton aria-label="ページ レイアウト"><Art w={13} h={13}><path d="M.5 .5h12v12H.5zM3.500 2.500h6v8h-6zM5 4.500h3M5 6.500h3M5 8.500h3" stroke="#666" /></Art></ViewButton>
        <ViewButton aria-label="改ページ プレビュー"><Art w={13} h={13}><path d="M.5 .5h12v12H.5zM4.500 .5v6h5M9.500 .5v6" stroke="#666" /></Art></ViewButton>
        <ZoomGroup>
          <ZoomSign aria-label="縮小"><Art w={7} h={7}><path d="M0 3.500h7" stroke="#5e5e5e" strokeWidth="2" /></Art></ZoomSign>
          <Zoom type="range" aria-label="ズーム" min={0} max={200} defaultValue={100} />
          <ZoomSign aria-label="拡大"><Art w={7} h={7}><path d="M0 3.500h7M3.500 0v7" stroke="#5e5e5e" strokeWidth="2" /></Art></ZoomSign>
          <ZoomValue>100%</ZoomValue>
        </ZoomGroup>
      </StatusBar>
      <RulesDialog />
    </Window>
  );
}
